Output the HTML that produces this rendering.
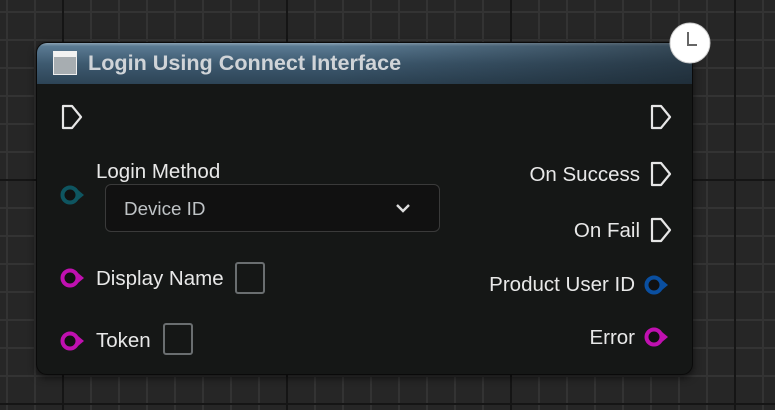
<!DOCTYPE html>
<html><head><style>
html,body{margin:0;padding:0}
body{width:775px;height:410px;overflow:hidden;position:relative;background-color:#262626;
background-image:
linear-gradient(to right,#151515 2px,transparent 2px),
linear-gradient(to bottom,#151515 2px,transparent 2px),
linear-gradient(to right,#333 2px,transparent 2px),
linear-gradient(to bottom,#333 2px,transparent 2px);
background-size:224px 224px,224px 224px,28px 28px,28px 28px;
background-position:62px 0,0 179px,6px 0,0 11px;
font-family:"Liberation Sans",sans-serif;}
.node{position:absolute;left:36px;top:42px;width:657px;height:333px;border-radius:11px;background:#151716;box-shadow:0 3px 8px rgba(0,0,0,.6);overflow:hidden;border:1px solid #0a0a0a;box-sizing:border-box}
.hdr{position:absolute;left:0;top:0;width:100%;height:41px;background:linear-gradient(to bottom,#8aa2b4 0,#5a7a92 8%,#3e5a70 50%,#2d4456 100%);}
.hdr:after{content:"";position:absolute;right:0;top:0;width:55%;height:100%;background:linear-gradient(to right,transparent,rgba(20,28,34,.55))}
.t{position:absolute;color:#e8e8e8;font-size:20.5px;white-space:nowrap}
.title{left:51px;top:7px;color:#d0d4d8;font-weight:bold;font-size:21.6px;z-index:2}
.icon{position:absolute;left:16px;top:8px;width:24px;height:24px;background:#a7adb1;border:1px solid #eee;border-top:6px solid #f2f2f2;box-sizing:border-box;z-index:2}
.dd{position:absolute;left:68px;top:141px;width:335px;height:48px;border:1px solid #3a3a3a;border-radius:6px;background:#111;box-sizing:border-box}
.box{position:absolute;width:30px;height:32px;border:2px solid #6a6e70;border-radius:3px;box-sizing:border-box}
svg{position:absolute;overflow:visible}
</style></head><body>
<div class="node">
<div class="hdr"></div>
<div class="icon"></div>
<div class="t title">Login Using Connect Interface</div>
<svg style="left:0;top:0" width="657" height="333">
<g fill="none" stroke="#e6e6e6" stroke-width="2.2" stroke-linejoin="round">
<path d="M26 63h9l9 11l-9 11h-9z"/>
<path d="M615 63h9l9 11l-9 11h-9z"/>
<path d="M615 120h9l9 11l-9 11h-9z"/>
<path d="M615 176h9l9 11l-9 11h-9z"/>
</g>
<circle cx="33" cy="152" r="7.5" fill="#111" stroke="#0e5560" stroke-width="4"/><path d="M41 147l6 5l-6 5z" fill="#0e5560"/>
<circle cx="33" cy="235" r="7.5" fill="#111" stroke="#c010b0" stroke-width="4"/><path d="M41 230l6 5l-6 5z" fill="#c010b0"/>
<circle cx="33" cy="298" r="7.5" fill="#111" stroke="#c010b0" stroke-width="4"/><path d="M41 293l6 5l-6 5z" fill="#c010b0"/>
<circle cx="617" cy="242" r="7.5" fill="#111" stroke="#0a4fa0" stroke-width="4"/><path d="M625 237l6 5l-6 5z" fill="#0a4fa0"/>
<circle cx="617" cy="294" r="7.5" fill="#111" stroke="#c010b0" stroke-width="4"/><path d="M625 289l6 5l-6 5z" fill="#c010b0"/>
</svg>
<div class="t" style="left:59px;top:117px">Login Method</div>
<div class="dd"><div class="t" style="left:18px;top:13px;font-size:18.8px;color:#bfc3c6">Device ID</div>
<svg style="left:289px;top:18px" width="16" height="10"><path d="M2 2l6 6l6-6" fill="none" stroke="#ddd" stroke-width="2.4"/></svg></div>
<div class="t" style="left:59px;top:224px">Display Name</div>
<div class="box" style="left:198px;top:219px"></div>
<div class="t" style="left:59px;top:286px">Token</div>
<div class="box" style="left:126px;top:280px"></div>
<div class="t" style="right:52px;top:120px">On Success</div>
<div class="t" style="right:52px;top:176px">On Fail</div>
<div class="t" style="right:57px;top:230px">Product User ID</div>
<div class="t" style="right:57px;top:283px">Error</div>
</div>
<svg style="left:669px;top:22px" width="42" height="42"><circle cx="21" cy="21" r="20" fill="#fff" stroke="#ccc" stroke-width="1"/><path d="M19 10v13h9" fill="none" stroke="#666" stroke-width="2"/></svg>
</body></html>
